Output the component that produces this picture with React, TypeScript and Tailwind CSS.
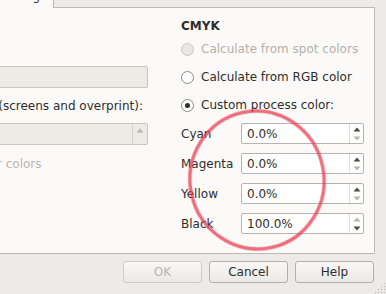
import { ReactNode } from "react";

const font = "font-['DejaVu_Sans','Liberation_Sans',sans-serif]";

function Arrow({ up, active }: { up?: boolean; active?: boolean }) {
    return (
        <svg width="8" height="5" viewBox="0 0 8 5">
            <path
                d={up ? "M0.5 4.5 L4 0.5 L7.5 4.5 Z" : "M0.5 0.5 L4 4.5 L7.5 0.5 Z"}
                fill={active ? "#4c4b48" : "#b6b4b0"}
            />
        </svg>
    );
}

function Spin({ value, upActive, downActive }: { value: string; upActive: boolean; downActive: boolean }) {
    return (
        <div className="flex h-[21px] w-[123px] rounded-[2px] border border-[#b7b4af] bg-white">
            <div className="flex flex-1 items-center pl-[5px]">{value}</div>
            <div className="flex w-[14px] flex-col items-center justify-center gap-[4px] border-l border-[#dedbd7]">
                <Arrow up active={upActive} />
                <Arrow active={downActive} />
            </div>
        </div>
    );
}

function Radio({ label, checked, disabled }: { label: string; checked?: boolean; disabled?: boolean }) {
    return (
        <div className="flex h-[14px] items-center gap-[7px]">
            <div
                className={`flex h-[13px] w-[13px] items-center justify-center rounded-full border ${
                    disabled ? "border-[#c9c6c2] bg-[#e9e7e3]" : "border-[#8d8a86] bg-white"
                }`}
            >
                {checked && <div className="h-[5px] w-[5px] rounded-full bg-[#2f2e2c]" />}
            </div>
            <span className={disabled ? "text-[#b3b0ab]" : "text-[#2e2d2b]"}>{label}</span>
        </div>
    );
}

function Row({ label, children }: { label: string; children: ReactNode }) {
    return (
        <div className="flex h-[21px] items-center">
            <span className="w-[60px]">{label}</span>
            {children}
        </div>
    );
}

function Button({ label, disabled }: { label: string; disabled?: boolean }) {
    return (
        <button
            className={`flex h-[22px] w-[79px] items-center justify-center rounded-[3px] border bg-gradient-to-b from-[#f9f8f7] to-[#ebe9e6] ${
                disabled ? "border-[#cfccc8] text-[#b8b5b1]" : "border-[#b4b1ac] text-[#2e2d2b]"
            }`}
        >
            {label}
        </button>
    );
}

export default function App() {
    return (
        <div className={`relative h-[294px] w-[386px] overflow-hidden bg-[#edebe7] text-[12px] leading-[14px] text-[#2e2d2b] ${font}`}>
            <div className="flex h-[8px]">
                <div className="flex w-[54px] justify-end overflow-hidden border-r border-[#bdbab5] bg-[#fcfaf8] pr-[13px]">
                    <span className="-mt-[11px] whitespace-nowrap">Coloring</span>
                </div>
                <div className="w-[321px] border-b border-[#bdbab5]" />
            </div>

            <div className="flex h-[246px] w-[375px] gap-[33px] border-r border-b border-[#bdbab5] bg-[#fcfaf8] pr-[10px]">
                <div className="flex w-[148px] flex-col">
                    <div className="mt-[58px] h-[22px] rounded-r-[2px] border border-l-0 border-[#c9c6c1] bg-[#eeebe7]" />
                    <div className="mt-[11px] flex justify-end whitespace-nowrap pr-[5px]">
                        Separation (screens and overprint):
                    </div>
                    <div className="mt-[10px] flex h-[22px] rounded-r-[2px] border border-l-0 border-[#c9c6c1] bg-[#eeebe7]">
                        <div className="flex-1" />
                        <div className="flex w-[15px] flex-col items-center gap-[6px] border-l border-[#d6d3ce] pt-[4px]">
                            <Arrow up />
                        </div>
                    </div>
                    <div className="-ml-[3px] mt-[12px] whitespace-nowrap text-[#b8b5b0]">r colors</div>
                </div>

                <div className="flex w-[183px] flex-col">
                    <div className="mt-[11px] font-bold">CMYK</div>
                    <div className="mt-[9px] flex flex-col gap-[14px]">
                        <Radio label="Calculate from spot colors" disabled />
                        <Radio label="Calculate from RGB color" />
                        <Radio label="Custom process color:" checked />
                    </div>
                    <div className="mt-[11px] flex flex-col gap-[9px]">
                        <Row label="Cyan">
                            <Spin value="0.0%" upActive downActive={false} />
                        </Row>
                        <Row label="Magenta">
                            <Spin value="0.0%" upActive downActive={false} />
                        </Row>
                        <Row label="Yellow">
                            <Spin value="0.0%" upActive downActive={false} />
                        </Row>
                        <Row label="Black">
                            <Spin value="100.0%" upActive={false} downActive />
                        </Row>
                    </div>
                </div>
            </div>

            <div className="mt-[7px] flex justify-end gap-[7px] pr-[12px]">
                <Button label="OK" disabled />
                <Button label="Cancel" />
                <Button label="Help" />
            </div>

            <svg className="absolute right-0 bottom-0" width="11" height="12" viewBox="0 0 11 12">
                {[
                    [9, 2], [9, 5], [6, 5], [9, 8], [6, 8], [3, 8], [9, 11], [6, 11], [3, 11], [0, 11],
                ].map(([x, y], i) => (
                    <rect key={i} x={x} y={y - 1} width="1" height="1" fill="#b5b2ad" />
                ))}
            </svg>

            <svg className="pointer-events-none absolute top-[106px] left-[183px]" width="150" height="150" viewBox="0 0 150 150">
                <defs>
                    <filter id="soft">
                        <feGaussianBlur stdDeviation="0.6" />
                    </filter>
                </defs>
                <ellipse
                    cx="74"
                    cy="74"
                    rx="67"
                    ry="69"
                    transform="rotate(-12 74 74)"
                    fill="none"
                    stroke="#e8364c"
                    strokeOpacity="0.72"
                    strokeWidth="3.4"
                    filter="url(#soft)"
                />
            </svg>
        </div>
    );
}
